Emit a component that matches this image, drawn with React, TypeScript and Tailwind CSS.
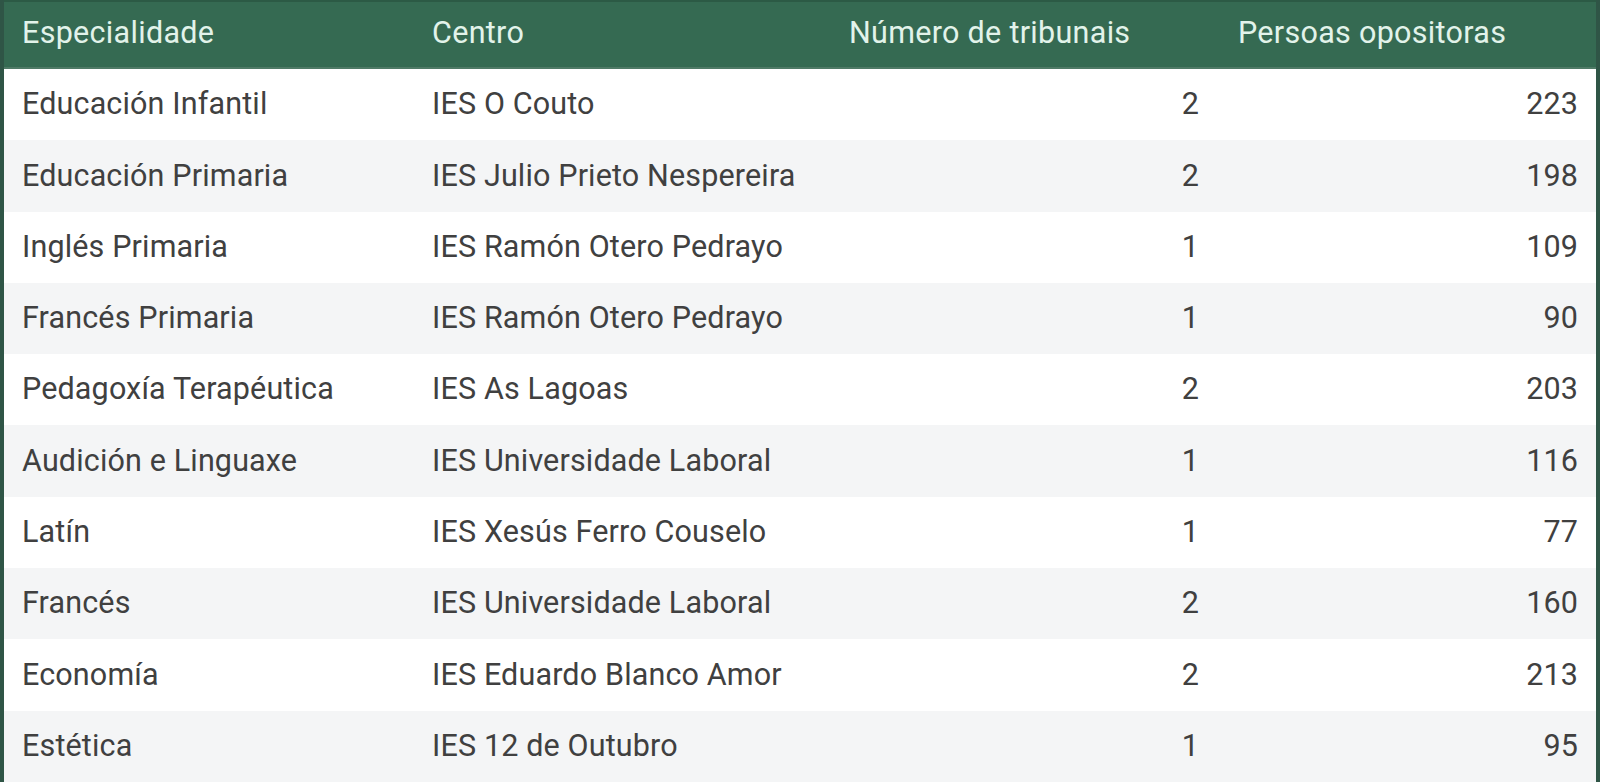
import React from "react";

const rows: [string, string, number, number][] = [
  ["Educación Infantil", "IES O Couto", 2, 223],
  ["Educación Primaria", "IES Julio Prieto Nespereira", 2, 198],
  ["Inglés Primaria", "IES Ramón Otero Pedrayo", 1, 109],
  ["Francés Primaria", "IES Ramón Otero Pedrayo", 1, 90],
  ["Pedagoxía Terapéutica", "IES As Lagoas", 2, 203],
  ["Audición e Linguaxe", "IES Universidade Laboral", 1, 116],
  ["Latín", "IES Xesús Ferro Couselo", 1, 77],
  ["Francés", "IES Universidade Laboral", 2, 160],
  ["Economía", "IES Eduardo Blanco Amor", 2, 213],
  ["Estética", "IES 12 de Outubro", 1, 95],
];

export default function App() {
  return (
    <div
      className="w-[1600px] h-[782px] overflow-hidden bg-white border-l-4 border-r-4 border-[#2f5546] text-[30.5px]"
      style={{ fontFamily: "Roboto, 'Noto Sans', sans-serif" }}
    >
      <div className="grid grid-cols-[410px_417px_389px_1fr] h-[69px] items-center pb-[3px] tracking-[0.3px] bg-[#356a52] text-[#e2f3ea] border-t-2 border-t-[#2c5a45] border-b-2 border-b-[#4f7a66]">
        <div className="pl-[18px]">Especialidade</div>
        <div className="pl-[18px]">Centro</div>
        <div className="pl-[18px]">Número de tribunais</div>
        <div className="pl-[18px]">Persoas opositoras</div>
      </div>
      {rows.map((r, i) => (
        <div
          key={i}
          className={
            "grid grid-cols-[410px_417px_389px_1fr] h-[71.3px] items-center pb-[1px] tracking-[0.15px] text-[#404040] " +
            (i % 2 === 0 ? "bg-white" : "bg-[#f4f5f6]")
          }
        >
          <div className="pl-[18px]">{r[0]}</div>
          <div className="pl-[18px]">{r[1]}</div>
          <div className="pr-[21px] text-right">{r[2]}</div>
          <div className="pr-[18px] text-right">{r[3]}</div>
        </div>
      ))}
    </div>
  );
}
